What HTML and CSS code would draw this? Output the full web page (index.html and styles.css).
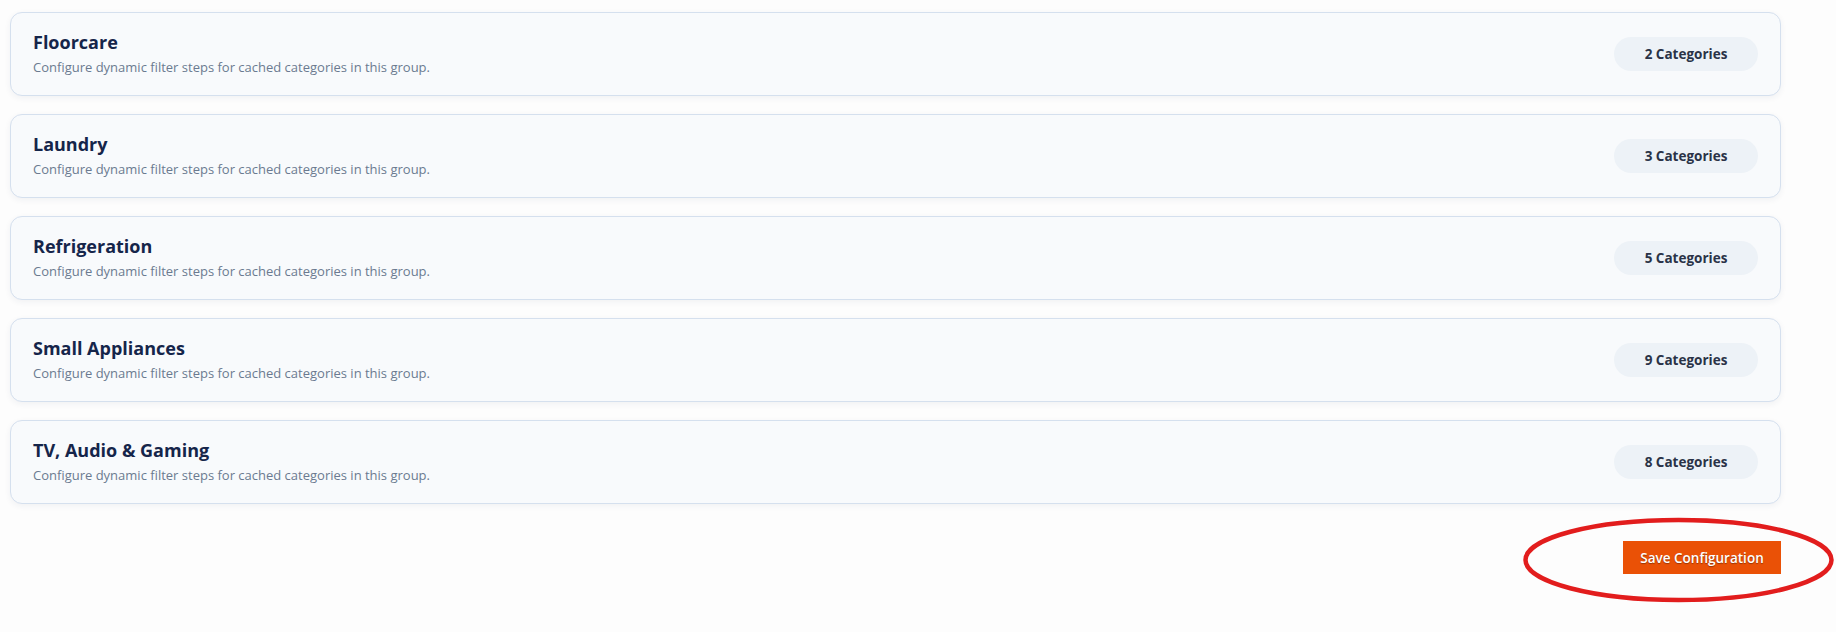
FILE: index.html
```html
<!DOCTYPE html>
<html>
<head>
<meta charset="utf-8">
<link rel="stylesheet" href="styles.css">
</head>
<body>
<div class="page">
  <div class="groups">
    <div class="card">
      <div class="info"><h3 class="title">Floorcare</h3><p class="desc">Configure dynamic filter steps for cached categories in this group.</p></div>
      <span class="badge">2 Categories</span>
    </div>
    <div class="card">
      <div class="info"><h3 class="title">Laundry</h3><p class="desc">Configure dynamic filter steps for cached categories in this group.</p></div>
      <span class="badge">3 Categories</span>
    </div>
    <div class="card">
      <div class="info"><h3 class="title">Refrigeration</h3><p class="desc">Configure dynamic filter steps for cached categories in this group.</p></div>
      <span class="badge">5 Categories</span>
    </div>
    <div class="card">
      <div class="info"><h3 class="title">Small Appliances</h3><p class="desc">Configure dynamic filter steps for cached categories in this group.</p></div>
      <span class="badge">9 Categories</span>
    </div>
    <div class="card">
      <div class="info"><h3 class="title">TV, Audio &amp; Gaming</h3><p class="desc">Configure dynamic filter steps for cached categories in this group.</p></div>
      <span class="badge">8 Categories</span>
    </div>
  </div>
  <div class="actions">
    <button class="save">Save Configuration</button>
    <svg class="annot" viewBox="0 0 316 90"><ellipse cx="156.5" cy="42" rx="153" ry="40" fill="none" stroke="#e21d1d" stroke-width="4.5"/></svg>
  </div>
</div>
</body>
</html>
```
FILE: styles.css
```css
html, body { margin: 0; padding: 0; background: #fdfdfd; }
body { font-family: "Open Sans", "Noto Sans", sans-serif; }
.page { width: 1771px; padding: 12px 0 70px 10px; }
.groups { display: flex; flex-direction: column; gap: 18px; }
.card {
  height: 84px; box-sizing: border-box;
  display: flex; align-items: center; justify-content: space-between;
  padding: 0 22px 0 22px;
  background: #f8fafc;
  border: 1px solid #d5e0ee;
  border-radius: 12px;
  box-shadow: 0 2px 6px rgba(30, 50, 90, 0.06);
}
.info { display: flex; flex-direction: column; margin-top: -2px; }
.title { margin: 0; font-size: 18px; font-weight: 700; color: #15254a; line-height: 22px; }
.desc { margin: 5px 0 0; font-size: 13px; color: #6b7a90; line-height: 18px; }
.badge {
  width: 144px; height: 34px; border-radius: 17px;
  background: #edf2f7; color: #2a3347;
  font-size: 13.5px; font-weight: 700;
  display: flex; align-items: center; justify-content: center;
}
.actions { position: relative; display: flex; justify-content: flex-end; margin-top: 37px; }
.save {
  width: 158px; height: 33px; border: 0; border-radius: 0;
  background: #ea5106; color: #fff;
  font-family: "Open Sans", sans-serif; font-size: 13.5px; font-weight: 600;
  text-shadow: 0 1px 1px rgba(0,0,0,0.35);
}
.annot { position: absolute; display: block; left: 1512px; top: -23px; width: 316px; height: 90px; overflow: visible; }
```
